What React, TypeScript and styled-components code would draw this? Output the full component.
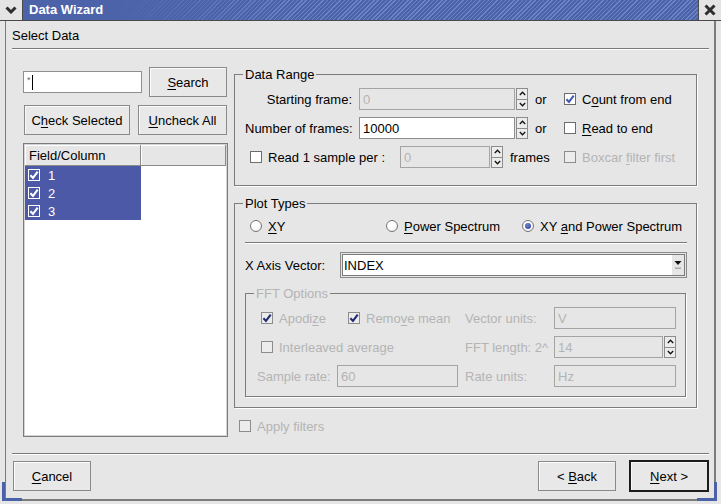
import React from "react";
import styled, { createGlobalStyle, css } from "styled-components";

const GlobalStyle = createGlobalStyle`
  html, body {
    margin: 0;
    padding: 0;
    background: #e6e6e6;
  }

  body {
    font-family: "Liberation Sans", Arial, sans-serif;
    font-size: 13px;
    color: #000;
  }

  * {
    box-sizing: border-box;
  }
`;

const DISABLED = "#b4b4b4";
const BORDER = "#7c7c7c";

function Tick({ color }: { color: string }) {
    return (
        <svg width="10" height="10" viewBox="0 0 10 10">
            <path d="M1.4 5.2 L4 7.9 L8.7 1.7" stroke={color} strokeWidth="2.1" fill="none" />
        </svg>
    );
}

function Arrow({ up }: { up?: boolean }) {
    return (
        <svg width="7" height="5" viewBox="0 0 7 5">
            <polyline
                points={up ? "0.8,4 3.5,1.2 6.2,4" : "0.8,1 3.5,3.8 6.2,1"}
                stroke="#111"
                strokeWidth="1.3"
                fill="none"
            />
        </svg>
    );
}

type BoxKind = "normal" | "disabled" | "list";

function CheckBox({ on, kind = "normal" }: { on?: boolean; kind?: BoxKind }) {
    const color = kind === "list" ? "#fff" : kind === "disabled" ? "#1f2b72" : "#4257b0";
    return <Box $kind={kind}>{on && <Tick color={color} />}</Box>;
}

type OptionProps = {
    children: React.ReactNode;
    on?: boolean;
    radio?: boolean;
    disabled?: boolean;
    width?: number;
    pad?: number;
};

function Option({ children, on, radio, disabled, width, pad }: OptionProps) {
    return (
        <CheckItem $width={width} $pad={pad} $disabled={disabled}>
            {radio ? <Radio $on={on} /> : <CheckBox on={on} kind={disabled ? "disabled" : "normal"} />}
            <span>{children}</span>
        </CheckItem>
    );
}

function SpinBox({ width, value, disabled }: { width: number; value: string; disabled?: boolean }) {
    return (
        <Spin $width={width}>
            <Field $disabled={disabled} $grow>
                {value}
            </Field>
            <SpinButtons>
                <SpinButton>
                    <Arrow up />
                </SpinButton>
                <SpinButton>
                    <Arrow />
                </SpinButton>
            </SpinButtons>
        </Spin>
    );
}

export default function App() {
    return (
        <>
            <GlobalStyle />
            <Window>
                <TitleBar>
                    <TitleButton $side="left">
                        <svg width="12" height="8" viewBox="0 0 12 8">
                            <polyline points="1.5,1.5 6,6 10.5,1.5" stroke="#2e2e2e" strokeWidth="3" fill="none" />
                        </svg>
                    </TitleButton>
                    <TitleText>Data Wizard</TitleText>
                    <TitleButton $side="right">
                        <svg width="12" height="12" viewBox="0 0 12 12">
                            <path d="M1.5 1.5 L10.5 10.5 M10.5 1.5 L1.5 10.5" stroke="#2e2e2e" strokeWidth="3" />
                        </svg>
                    </TitleButton>
                </TitleBar>

                <Frame>
                    <Heading>Select Data</Heading>
                    <Separator />

                    <Main>
                        <LeftColumn>
                            <ToolRow>
                                <Field $width={119}>
                                    <Asterisk>*</Asterisk>
                                    <Caret />
                                </Field>
                                <Button $width={78}>
                                    <Mn>S</Mn>earch
                                </Button>
                            </ToolRow>
                            <ToolRow $inset>
                                <Button $width={106}>
                                    C<Mn>h</Mn>eck Selected
                                </Button>
                                <Button $width={89}>
                                    <Mn>U</Mn>ncheck All
                                </Button>
                            </ToolRow>
                            <ListView>
                                <ListHeader>
                                    <HeaderCell $width={116}>Field/Column</HeaderCell>
                                    <HeaderCell />
                                </ListHeader>
                                {["1", "2", "3"].map((name) => (
                                    <ListRow key={name}>
                                        <CheckBox on kind="list" />
                                        <span>{name}</span>
                                    </ListRow>
                                ))}
                            </ListView>
                        </LeftColumn>

                        <RightColumn>
                            <Group $pad="6px 10px 17px 10px">
                                <Legend>Data Range</Legend>
                                <FormRow>
                                    <Label $width={107} $right $after={7}>
                                        Starting frame:
                                    </Label>
                                    <SpinBox width={169} value="0" disabled />
                                    <Label $width={36} $pad={7}>
                                        or
                                    </Label>
                                    <Option on>
                                        C<Mn>o</Mn>unt from end
                                    </Option>
                                </FormRow>
                                <FormRow $gap>
                                    <Label $width={107} $right $after={7}>
                                        Number of frames:
                                    </Label>
                                    <SpinBox width={169} value="10000" />
                                    <Label $width={36} $pad={7}>
                                        or
                                    </Label>
                                    <Option>
                                        <Mn>R</Mn>ead to end
                                    </Option>
                                </FormRow>
                                <FormRow $gap>
                                    <Option width={155} pad={5}>
                                        Read 1 sample per :
                                    </Option>
                                    <SpinBox width={103} value="0" disabled />
                                    <Label $width={61} $pad={7}>
                                        frames
                                    </Label>
                                    <Option disabled>
                                        Boxcar <Mn>f</Mn>ilter first
                                    </Option>
                                </FormRow>
                            </Group>

                            <Group $pad="6px 10px 10px 10px" $top={10}>
                                <Legend>Plot Types</Legend>
                                <RadioRow>
                                    <Option radio>
                                        <Mn>X</Mn>Y
                                    </Option>
                                    <Option radio>
                                        <Mn>P</Mn>ower Spectrum
                                    </Option>
                                    <Option radio on>
                                        XY <Mn>a</Mn>nd Power Spectrum
                                    </Option>
                                </RadioRow>
                                <InnerSeparator />
                                <ComboRow>
                                    <Label $width={95}>X Axis Vector:</Label>
                                    <Combo>
                                        INDEX
                                        <ComboButton>
                                            <svg width="8" height="10" viewBox="0 0 8 10">
                                                <path d="M0.5 1 L7.5 1 L4 5 Z" fill="#111" />
                                                <rect x="1" y="7.5" width="6" height="1.5" fill="#aaa" />
                                            </svg>
                                        </ComboButton>
                                    </Combo>
                                </ComboRow>

                                <Group $pad="6px 9px 9px 10px" $top={8}>
                                    <Legend $disabled>FFT Options</Legend>
                                    <FormRow>
                                        <Option width={92} pad={5} on disabled>
                                            Apodi<Mn>z</Mn>e
                                        </Option>
                                        <Option width={110} on disabled>
                                            Remo<Mn>v</Mn>e mean
                                        </Option>
                                        <Label $width={96} $pad={7} $disabled>
                                            Vector units:
                                        </Label>
                                        <Field $width={122} $disabled>
                                            V
                                        </Field>
                                    </FormRow>
                                    <FormRow $gap>
                                        <Option width={202} pad={5} disabled>
                                            Interleaved average
                                        </Option>
                                        <Label $width={96} $pad={7} $disabled>
                                            FFT length: 2^
                                        </Label>
                                        <SpinBox width={122} value="14" disabled />
                                    </FormRow>
                                    <FormRow $gap>
                                        <Label $width={81} $pad={1} $disabled>
                                            Sample rate:
                                        </Label>
                                        <Field $width={121} $disabled>
                                            60
                                        </Field>
                                        <Label $width={96} $pad={7} $disabled>
                                            Rate units:
                                        </Label>
                                        <Field $width={122} $disabled>
                                            Hz
                                        </Field>
                                    </FormRow>
                                </Group>
                            </Group>

                            <ApplyRow>
                                <Option pad={5} disabled>
                                    Apply filters
                                </Option>
                            </ApplyRow>
                        </RightColumn>
                    </Main>

                    <Separator />
                    <ButtonRow>
                        <Button $width={78}>
                            <Mn>C</Mn>ancel
                        </Button>
                        <Spacer />
                        <Button $width={78}>
                            &lt; <Mn>B</Mn>ack
                        </Button>
                        <Button $width={78} $default>
                            <Mn>N</Mn>ext &gt;
                        </Button>
                    </ButtonRow>
                </Frame>

                <Corner $side="left" />
                <Corner $side="right" />
            </Window>
        </>
    );
}

const Window = styled.div`
    position: relative;
    width: 721px;
    height: 504px;
    background: #e6e6e6;
    display: flex;
    flex-direction: column;
    overflow: hidden;
`;

const TitleBar = styled.div`
    height: 21px;
    display: flex;
    border-bottom: 1px solid #4a4a4a;
`;

const TitleButton = styled.div<{ $side: "left" | "right" }>`
    width: 23px;
    display: flex;
    align-items: center;
    justify-content: center;
    background: #e4e4e4;
    ${(p) => (p.$side === "left" ? "border-right: 1px solid #4a4a4a;" : "border-left: 1px solid #4a4a4a;")}
`;

const TitleText = styled.div`
    flex: 1;
    padding-left: 6px;
    line-height: 20px;
    color: #fff;
    font-weight: bold;
    font-size: 13px;
    background: linear-gradient(to right, #4d63a9 90px, rgba(77, 99, 169, 0) 280px),
        repeating-linear-gradient(135deg, #4d63a9 0 2px, #6c85c7 2px 3px);
`;

const Frame = styled.div`
    flex: 1;
    margin: 0 5px 3px 5px;
    border: solid ${BORDER};
    border-width: 0 2px 2px 1px;
    display: flex;
    flex-direction: column;
`;

const Corner = styled.div<{ $side: "left" | "right" }>`
    position: absolute;
    bottom: 3px;
    width: 20px;
    height: 19px;
    border-bottom: 3px solid #4b62a8;
    ${(p) =>
        p.$side === "left"
            ? "left: 2px; border-left: 3px solid #4b62a8;"
            : "right: 4px; border-right: 3px solid #4b62a8;"}
`;

const Heading = styled.div`
    margin: 7px 0 5px 6px;
    line-height: 15px;
`;

const Separator = styled.div`
    height: 2px;
    margin: 0 5px 0 6px;
    border-top: 1px solid #7a7a7a;
    border-bottom: 1px solid #fff;
`;

const Main = styled.div`
    height: 370px;
    margin: 17px 17px 16px 17px;
    display: flex;
    gap: 6px;
`;

const LeftColumn = styled.div`
    width: 205px;
    display: flex;
    flex-direction: column;
`;

const RightColumn = styled.div`
    flex: 1;
    display: flex;
    flex-direction: column;
`;

const ToolRow = styled.div<{ $inset?: boolean }>`
    height: 30px;
    margin-bottom: 8px;
    display: flex;
    align-items: center;
    gap: ${(p) => (p.$inset ? 8 : 7)}px;
    padding-left: ${(p) => (p.$inset ? 1 : 0)}px;
`;

const Field = styled.div<{ $width?: number; $disabled?: boolean; $grow?: boolean }>`
    ${(p) => (p.$grow ? "flex: 1;" : `width: ${p.$width}px; flex: none;`)}
    height: 22px;
    display: flex;
    align-items: center;
    padding: 0 3px;
    background: ${(p) => (p.$disabled ? "#e6e6e6" : "#fff")};
    border: 1px solid ${(p) => (p.$disabled ? "#a4a4a4" : "#8e8e8e")};
    color: ${(p) => (p.$disabled ? DISABLED : "#000")};
    white-space: nowrap;
`;

const Asterisk = styled.span`
    font-size: 9px;
    color: #666;
    align-self: flex-start;
    margin-top: 3px;
`;

const Caret = styled.span`
    width: 1px;
    height: 15px;
    margin-left: 1px;
    background: #000;
`;

const Button = styled.div<{ $width: number; $default?: boolean }>`
    width: ${(p) => p.$width}px;
    height: 30px;
    flex: none;
    display: flex;
    align-items: center;
    justify-content: center;
    background: #e8e8e8;
    border: 1px solid #8a8a8a;
    box-shadow: inset 1px 1px 0 #fafafa;
    white-space: pre;
    ${(p) =>
        p.$default &&
        css`
            width: ${p.$width + 2}px;
            height: 32px;
            margin: -1px -1px 0 13px;
            border: 2px solid #1c1c1c;
        `}
`;

const Mn = styled.span`
    text-decoration: underline;
    text-underline-offset: 2px;
`;

const ListView = styled.div`
    flex: 1;
    padding: 1px;
    background: #fff;
    border: 1px solid ${BORDER};
    box-shadow: inset 0 0 0 1px #d4d4d4;
`;

const ListHeader = styled.div`
    height: 21px;
    display: flex;
`;

const HeaderCell = styled.div<{ $width?: number }>`
    ${(p) => (p.$width ? `width: ${p.$width}px;` : "flex: 1;")}
    display: flex;
    align-items: center;
    padding-left: 4px;
    background: #e6e6e6;
    border-right: 1px solid #8a8a8a;
    border-bottom: 1px solid #8a8a8a;
    box-shadow: inset 1px 1px 0 #fff;
`;

const ListRow = styled.div`
    width: 116px;
    height: 18px;
    display: flex;
    align-items: center;
    gap: 8px;
    padding-left: 3px;
    background: #4b59a6;
    color: #fff;
`;

const Box = styled.span<{ $kind: BoxKind }>`
    width: 12px;
    height: 12px;
    flex: none;
    display: inline-flex;
    align-items: center;
    justify-content: center;
    border: 1px solid ${(p) => (p.$kind === "list" ? "#fff" : p.$kind === "disabled" ? "#8c8c8c" : "#6c6c6c")};
    background: ${(p) => (p.$kind === "list" ? "transparent" : p.$kind === "disabled" ? "#ececec" : "#fff")};
`;

const Radio = styled.span<{ $on?: boolean }>`
    width: 12px;
    height: 12px;
    flex: none;
    border-radius: 50%;
    border: 1px solid #767676;
    background: radial-gradient(circle at 40% 35%, #fff 40%, #e4e4e4);
    display: inline-flex;
    align-items: center;
    justify-content: center;

    &::after {
        content: "";
        width: 6px;
        height: 6px;
        border-radius: 50%;
        background: ${(p) => (p.$on ? "radial-gradient(circle at 40% 35%, #6d80cf, #2c3f94)" : "transparent")};
    }
`;

const Group = styled.fieldset<{ $pad: string; $top?: number }>`
    margin: ${(p) => p.$top || 0}px 0 0 0;
    min-width: 0;
    padding: ${(p) => p.$pad};
    border: 1px solid ${BORDER};
    box-shadow: 1px 1px 0 #fff;
`;

const Legend = styled.legend<{ $disabled?: boolean }>`
    padding: 0 2px;
    margin-left: -2px;
    line-height: 15px;
    color: ${(p) => (p.$disabled ? DISABLED : "#000")};
`;

const FormRow = styled.div<{ $gap?: boolean }>`
    height: 22px;
    margin-top: ${(p) => (p.$gap ? 7 : 0)}px;
    display: flex;
    align-items: center;
`;

const Label = styled.div<{ $width: number; $right?: boolean; $pad?: number; $after?: number; $disabled?: boolean }>`
    width: ${(p) => p.$width}px;
    flex: none;
    padding-left: ${(p) => p.$pad || 0}px;
    margin-right: ${(p) => p.$after || 0}px;
    text-align: ${(p) => (p.$right ? "right" : "left")};
    color: ${(p) => (p.$disabled ? DISABLED : "#000")};
    white-space: nowrap;
`;

const CheckItem = styled.div<{ $width?: number; $pad?: number; $disabled?: boolean }>`
    ${(p) => (p.$width ? `width: ${p.$width}px; flex: none;` : "")}
    height: 18px;
    display: flex;
    align-items: center;
    gap: 6px;
    padding-left: ${(p) => p.$pad || 0}px;
    color: ${(p) => (p.$disabled ? DISABLED : "#000")};
    white-space: pre;
`;

const Spin = styled.div<{ $width: number }>`
    width: ${(p) => p.$width}px;
    height: 22px;
    flex: none;
    display: flex;
`;

const SpinButtons = styled.div`
    width: 12px;
    display: flex;
    flex-direction: column;
    margin-left: 1px;
`;

const SpinButton = styled.div`
    flex: 1;
    display: flex;
    align-items: center;
    justify-content: center;
    background: #ececec;
    border: 1px solid #8c8c8c;

    & + & {
        border-top: none;
    }
`;

const RadioRow = styled.div`
    height: 18px;
    display: grid;
    grid-template-columns: 136px 136px 1fr;
    padding-left: 5px;
`;

const InnerSeparator = styled.div`
    height: 2px;
    margin: 7px -1px 0 0;
    border-top: 1px solid #7a7a7a;
    border-bottom: 1px solid #fff;
`;

const ComboRow = styled.div`
    height: 26px;
    margin: 8px -1px 0 0;
    display: flex;
    align-items: center;
`;

const Combo = styled.div`
    flex: 1;
    height: 26px;
    display: flex;
    align-items: center;
    padding-left: 3px;
    background: #fff;
    border: 1px solid #8a8a8a;
    box-shadow: inset 0 0 0 1px #e6e6e6, inset 0 0 0 2px #7a7a7a;
`;

const ComboButton = styled.div`
    width: 12px;
    height: 20px;
    margin-left: auto;
    margin-right: 2px;
    display: flex;
    align-items: center;
    justify-content: center;
    background: #e6e6e6;
`;

const ApplyRow = styled.div`
    margin-top: 9px;
`;

const ButtonRow = styled.div`
    height: 30px;
    margin: 6px 6px 8px 7px;
    display: flex;
    align-items: flex-start;
`;

const Spacer = styled.div`
    flex: 1;
`;
